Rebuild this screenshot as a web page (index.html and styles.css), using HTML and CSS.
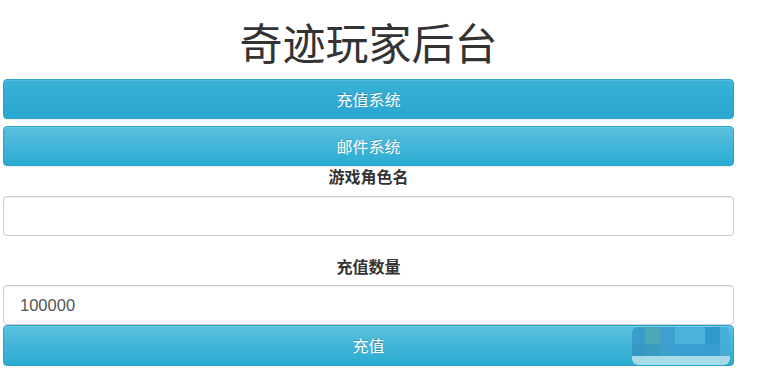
FILE: index.html
```html
<!DOCTYPE html>
<html lang="zh-CN">
<head>
<meta charset="utf-8">
<title>奇迹玩家后台</title>
<link rel="stylesheet" href="styles.css">
</head>
<body>
<div class="page">
  <h1 class="title">奇迹玩家后台</h1>
  <button class="btn btn-hover" type="button">充值系统</button>
  <button class="btn btn-second" type="button">邮件系统</button>
  <label class="label label-first" for="role">游戏角色名</label>
  <input class="field" id="role" type="text" value="">
  <label class="label label-second" for="amount">充值数量</label>
  <input class="field" id="amount" type="text" value="100000">
  <button class="btn btn-submit" type="button">充值
    <span class="mosaic" aria-hidden="true">
      <span class="tile t1"></span><span class="tile t2"></span><span class="tile t3"></span><span class="tile t4"></span><span class="tile t5"></span><span class="tile t6"></span>
      <span class="tile u1"></span><span class="tile u2"></span><span class="tile u3"></span><span class="tile u4"></span><span class="tile u5"></span><span class="tile u6"></span>
      <span class="strip"></span>
    </span>
  </button>
</div>
</body>
</html>
```

FILE: styles.css
```css
html, body {
  margin: 0;
  padding: 0;
  background: #ffffff;
}

.page {
  width: 731px;
  padding-left: 3px;
  display: flex;
  flex-direction: column;
  font-family: "Liberation Sans", "Noto Sans CJK SC", sans-serif;
  color: #333333;
}

.title {
  margin: 0 0 13px 0;
  padding-top: 17px;
  height: 49px;
  line-height: 49px;
  font-size: 43px;
  font-weight: 400;
  text-align: center;
  color: #333333;
  font-family: "Noto Sans CJK SC", sans-serif;
}

.btn {
  position: relative;
  display: block;
  width: 100%;
  height: 40px;
  margin: 0;
  padding: 0;
  border: 1px solid #28a4c9;
  border-radius: 4px;
  color: #ffffff;
  font-family: "Noto Sans CJK SC", sans-serif;
  font-size: 16px;
  line-height: 38px;
  text-align: center;
  cursor: pointer;
  background-image: linear-gradient(to bottom, #5bc0de 0%, #2aabd2 100%);
  box-shadow: inset 0 1px 0 rgba(255, 255, 255, 0.15), 0 1px 1px rgba(0, 0, 0, 0.075);
  text-shadow: 0 -1px 0 rgba(0, 0, 0, 0.2);
}

.btn-hover {
  background-image: linear-gradient(to bottom, #3ab2d8 0%, #2aa6cf 100%);
}

.btn-second {
  margin-top: 7px;
}

.btn-submit {
  height: 41px;
  line-height: 39px;
}

.label {
  display: block;
  text-align: center;
  font-family: "Noto Sans CJK SC", sans-serif;
  font-weight: 700;
  font-size: 16px;
  line-height: 20px;
  color: #333333;
}

.label-first {
  padding-top: 0;
  margin-bottom: 10px;
}

.label-second {
  margin-top: 20px;
  margin-bottom: 9px;
}

.field {
  display: block;
  box-sizing: border-box;
  width: 100%;
  height: 40px;
  margin: 0;
  padding: 0 16px;
  border: 1px solid #cccccc;
  border-radius: 4px;
  font-family: "Liberation Sans", sans-serif;
  font-size: 16.5px;
  color: #555555;
  background: #ffffff;
  box-shadow: inset 0 1px 1px rgba(0, 0, 0, 0.075);
  outline: none;
}

.mosaic {
  position: absolute;
  left: 628px;
  top: 1px;
  width: 98px;
  height: 38px;
  border-radius: 6px;
  overflow: hidden;
  display: grid;
  grid-template-columns: 13px 15px 15px 30px 15px 10px;
  grid-template-rows: 17px 12px 9px;
}

.tile { display: block; }
.t1 { background: #3a9cc9; }
.t2 { background: #4ca7b3; }
.t3 { background: #3f9fd0; }
.t4 { background: #4cb2dc; }
.t5 { background: #3299cc; }
.t6 { background: #47afd9; }
.u1 { background: #3696c4; }
.u2 { background: #3c9cc0; }
.u3 { background: #3d9fcd; }
.u4 { background: #3a9fd0; }
.u5 { background: #389dd0; }
.u6 { background: #46acd6; }

.strip {
  grid-column: 1 / 7;
  background: #a8dbe9;
  border-radius: 0 0 6px 6px;
}
```
